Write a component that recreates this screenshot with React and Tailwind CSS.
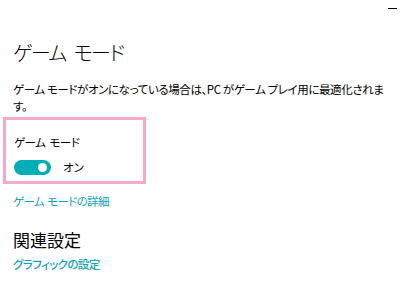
export default function App() {
  return (
    <div className="relative w-[400px] h-[289px] bg-white overflow-hidden font-['Noto_Sans_CJK_JP','Noto_Sans',sans-serif] [font-feature-settings:'palt'] text-black">
      <div className="absolute right-[3px] top-[8px] w-[9px] h-px bg-black" />
      <div className="pt-[38px] px-[13px]">
        <h1 className="text-[20px] leading-[30px] font-light tracking-[-1.5px] [word-spacing:5px]">ゲーム モード</h1>
        <p className="mt-[13px] text-[11.5px] leading-[17px] tracking-[-0.4px] pr-[2px]">
          ゲーム モードがオンになっている場合は、PC がゲーム プレイ用に最適化されます。
        </p>
      </div>
      <div className="ml-[3px] mt-[2px] w-[143px] h-[67px] border-[3px] border-[#f4a9cb] px-[8px] pt-[14px]">
        <div className="text-[11.5px] leading-[16px] tracking-[-0.5px] [word-spacing:2px]">ゲーム モード</div>
        <div className="mt-[9px] flex items-center gap-[12px]">
          <div className="w-[37px] h-[15px] rounded-full bg-[#00aeb8] flex items-center justify-end pr-[4px]">
            <div className="w-[9px] h-[9px] rounded-full bg-white" />
          </div>
          <span className="text-[11.5px] leading-[16px]">オン</span>
        </div>
      </div>
      <div className="px-[13px]">
        <div className="mt-[9px] text-[11.5px] leading-[16px] tracking-[-0.6px] [word-spacing:1px] text-[#12a3c1]">ゲーム モードの詳細</div>
        <div className="mt-[20px] text-[17px] leading-[22px]">関連設定</div>
        <div className="mt-[5px] text-[11.5px] leading-[16px] tracking-[-0.6px] font-medium text-[#12a3c1]">グラフィックの設定</div>
      </div>
    </div>
  );
}
